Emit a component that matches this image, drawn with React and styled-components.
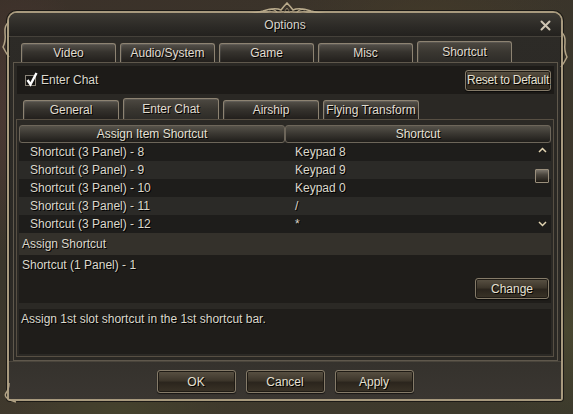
import React from "react";
import styled, { createGlobalStyle } from "styled-components";

const GlobalStyle = createGlobalStyle`
  html, body { margin: 0; padding: 0; }
  body {
    width: 573px; height: 414px; overflow: hidden;
    font-family: "Liberation Sans", Arial, sans-serif;
    font-size: 12px;
    color: #dcd8cc;
  }
  * { box-sizing: border-box; }
`;

const Page = styled.div`
  width: 573px;
  height: 414px;
  overflow: hidden;
  padding: 11px 0 0 7px;
  background:
    radial-gradient(ellipse 120px 200px at 20px 120px, rgba(90,60,60,0.55), transparent 70%),
    radial-gradient(ellipse 160px 120px at 560px 330px, rgba(80,80,50,0.6), transparent 70%),
    radial-gradient(ellipse 200px 90px at 430px 20px, rgba(70,60,40,0.6), transparent 70%),
    radial-gradient(ellipse 150px 60px at 120px 410px, rgba(70,70,45,0.7), transparent 70%),
    linear-gradient(160deg, #3b3129 0%, #3a362b 45%, #40392d 70%, #3c3a2c 100%);
`;

const Window = styled.div`
  position: relative;
  width: 556px;
  height: 390px;
  border: 2px solid #a89a7e;
  border-radius: 10px 10px 3px 3px;
  background: linear-gradient(#2d2b27, #2b2925 60%, #302d28);
  box-shadow: inset 0 0 0 1px #1a1815, 0 0 0 1px #1c1a16;
  display: flex;
  flex-direction: column;
`;

const Ornament = styled.svg`
  position: absolute;
  left: 218px;
  top: -11px;
  overflow: visible;
`;

const SideOrnament = styled.svg`
  position: absolute;
  top: ${(p) => p.$top}px;
  ${(p) => (p.$right ? "right: -7px;" : "left: -7px;")}
  overflow: visible;
`;

const TitleBar = styled.div`
  height: 24px;
  flex: none;
  display: flex;
  align-items: center;
  justify-content: center;
  position: relative;
  border-radius: 8px 8px 0 0;
  background: linear-gradient(#3d3a34, #2c2a26 60%, #23211e);
  border-bottom: 1px solid #45413a;
`;

const Title = styled.div`
  color: #d8d4ca;
  text-shadow: 1px 1px 0 #000;
  padding-top: 1px;
`;

const Close = styled.svg`
  position: absolute;
  right: 10px;
  top: 7px;
`;

const Body = styled.div`
  flex: 1;
  display: flex;
  flex-direction: column;
  padding: 0 3px 0 4px;
`;

const TabRow = styled.div`
  display: flex;
  align-items: flex-end;
  gap: 4px;
  height: 25px;
  padding-left: ${(p) => p.$pad}px;
  flex: none;
`;

const Tab = styled.div`
  width: ${(p) => p.$w}px;
  height: ${(p) => (p.$active ? 21 : 19)}px;
  display: flex;
  align-items: center;
  justify-content: center;
  white-space: nowrap;
  border: 1px solid #8d8372;
  border-bottom: none;
  border-radius: 3px 3px 0 0;
  color: #e0dcd0;
  text-shadow: 1px 1px 0 #000;
  background: ${(p) =>
    p.$active
      ? "linear-gradient(#4d4942, #3a3731 50%, #2e2c28)"
      : "linear-gradient(#55514a, #36332e 45%, #221f1c)"};
  box-shadow: inset 1px 1px 0 rgba(255,255,255,0.08);
`;

const Panel = styled.div`
  height: 299px;
  border: 1px solid #5f584c;
  background: #2a2824;
  display: flex;
  flex-direction: column;
  padding: 3px 3px 0 3px;
`;

const ChatBar = styled.div`
  height: 28px;
  flex: none;
  background: #1d1b18;
  display: flex;
  align-items: center;
  padding: 0 3px 0 8px;
`;

const CheckBox = styled.div`
  width: 11px;
  height: 11px;
  border: 1px solid #8b8579;
  background: #151412;
  position: relative;
  margin-right: 5px;
`;

const CheckMark = styled.svg`
  position: absolute;
  left: 0;
  top: -3px;
  overflow: visible;
`;

const Label = styled.span`
  color: #dcd8cc;
  text-shadow: 1px 1px 0 #000;
  flex: ${(p) => (p.$grow ? 1 : "none")};
`;

const Button = styled.div`
  width: ${(p) => p.$w}px;
  height: ${(p) => p.$h}px;
  display: flex;
  align-items: center;
  justify-content: center;
  white-space: nowrap;
  letter-spacing: ${(p) => (p.$tight ? "-0.25px" : "0")};
  border: 1px solid #857b69;
  border-radius: 3px;
  color: #e6e0d2;
  text-shadow: 1px 1px 0 #000;
  background: linear-gradient(#5a5244, #3d362b 45%, #2b251d 55%, #3a3327);
  box-shadow: inset 0 0 0 1px #1f1b15, 0 1px 1px rgba(0,0,0,0.6);
  flex: none;
`;

const SubPanel = styled.div`
  flex: 1;
  margin: 0 0 3px -1px;
  width: 538px;
  border: 1px solid #574f43;
  background: #2b2925;
  padding: 5px 2px 0 2px;
  display: flex;
  flex-direction: column;
`;

const HeaderRow = styled.div`
  display: grid;
  grid-template-columns: 266px 266px;
  height: 18px;
`;

const HeaderCell = styled.div`
  display: flex;
  align-items: center;
  justify-content: center;
  border: 1px solid #6d665a;
  border-radius: 3px;
  color: #e4e0d4;
  text-shadow: 1px 1px 0 #000;
  background: linear-gradient(#56524a, #3c3933 45%, #1f1d1a);
`;

const Rows = styled.div`
  position: relative;
`;

const Row = styled.div`
  display: grid;
  grid-template-columns: 266px 266px;
  height: 18px;
  align-items: center;
  background: ${(p) => (p.$alt ? "#2b2a27" : "#1e1d1b")};
  color: #dcd8cc;
  text-shadow: 1px 1px 0 #000;
`;

const Cell = styled.div`
  padding-left: ${(p) => p.$pad}px;
  white-space: nowrap;
`;

const ScrollArrow = styled.svg`
  position: absolute;
  right: 4px;
  top: ${(p) => p.$top}px;
`;

const Thumb = styled.div`
  position: absolute;
  right: 2px;
  top: 26px;
  width: 14px;
  height: 14px;
  border: 1px solid #9a8f7c;
  border-radius: 1px;
  background: linear-gradient(#7b756b, #4a453d 40%, #1e1a14);
`;

const SectionLabel = styled.div`
  height: 22px;
  display: flex;
  align-items: center;
  padding-left: 3px;
  background: #34312b;
  text-shadow: 1px 1px 0 #000;
`;

const AssignBox = styled.div`
  height: 48px;
  background: #1f1d1a;
  padding: 3px 2px 4px 3px;
  display: flex;
  flex-direction: column;
  justify-content: space-between;
  text-shadow: 1px 1px 0 #000;
`;

const ButtonRight = styled.div`
  display: flex;
  justify-content: flex-end;
`;

const DescBox = styled.div`
  height: 45px;
  margin-top: 6px;
  background: #1f1d1a;
  padding: 3px 2px;
  text-shadow: 1px 1px 0 #000;
`;

const Footer = styled.div`
  flex: 1;
  display: flex;
  justify-content: center;
  align-items: flex-start;
  gap: 10px;
  padding-top: 8px;
  margin: 0 -3px 0 -4px;
  border-top: 1px solid #4a453c;
  background: linear-gradient(#35322d, #3a3631);
`;

const rows = [
  ["Shortcut (3 Panel) - 8", "Keypad 8"],
  ["Shortcut (3 Panel) - 9", "Keypad 9"],
  ["Shortcut (3 Panel) - 10", "Keypad 0"],
  ["Shortcut (3 Panel) - 11", "/"],
  ["Shortcut (3 Panel) - 12", "*"],
];

const mainTabs = ["Video", "Audio/System", "Game", "Misc", "Shortcut"];
const subTabs = ["General", "Enter Chat", "Airship", "Flying Transform"];

export default function App() {
  return (
    <>
      <GlobalStyle />
      <Page>
        <Window>
          <Ornament width="120" height="18" viewBox="0 0 120 18">
            <path d="M0 13 Q22 13 36 9 Q48 5 54 8 Q57 4 60 1 Q63 4 66 8 Q72 5 84 9 Q98 13 120 13" fill="none" stroke="#b9aa8b" strokeWidth="1.6" />
            <path d="M10 15 Q30 15 42 11 Q52 8 56 11 Q58 9 60 6 Q62 9 64 11 Q68 8 78 11 Q90 15 110 15" fill="none" stroke="#8a7d66" strokeWidth="1" />
            <path d="M50 10 Q46 6 42 8 M70 10 Q74 6 78 8" fill="none" stroke="#b9aa8b" strokeWidth="1.2" />
          </Ornament>
          <SideOrnament $top={6} width="10" height="40" viewBox="0 0 10 40">
            <path d="M8 2 Q2 6 3 14 Q4 22 1 28 Q4 34 7 38" fill="none" stroke="#b3a487" strokeWidth="1.5" />
          </SideOrnament>
          <SideOrnament $top={16} $right width="10" height="40" viewBox="0 0 10 40">
            <path d="M2 2 Q8 6 7 14 Q6 22 9 28 Q6 34 3 38" fill="none" stroke="#b3a487" strokeWidth="1.5" />
          </SideOrnament>
          <SideOrnament $top={370} width="14" height="20" viewBox="0 0 14 20">
            <path d="M7 0 Q7 6 4 10 Q2 13 6 16 Q9 18 14 19" fill="none" stroke="#b3a487" strokeWidth="1.5" />
          </SideOrnament>
          <TitleBar>
            <Title>Options</Title>
            <Close width="11" height="11" viewBox="0 0 11 11">
              <path d="M1.5 1.5 L9.5 9.5 M9.5 1.5 L1.5 9.5" stroke="#cfc5b3" strokeWidth="2" strokeLinecap="round" />
            </Close>
          </TitleBar>
          <Body>
            <TabRow $pad={8}>
              {mainTabs.map((t) => (
                <Tab key={t} $w={95} $active={t === "Shortcut"}>{t}</Tab>
              ))}
            </TabRow>
            <Panel>
              <ChatBar>
                <CheckBox>
                  <CheckMark width="12" height="13" viewBox="0 0 12 13">
                    <path d="M1.5 7 L4.5 11.5 L10.5 0" fill="none" stroke="#ffffff" strokeWidth="2.4" />
                  </CheckMark>
                </CheckBox>
                <Label $grow>Enter Chat</Label>
                <Button $w={86} $h={21} $tight>Reset to Default</Button>
              </ChatBar>
              <TabRow $pad={6}>
                {subTabs.map((t) => (
                  <Tab key={t} $w={96} $active={t === "Enter Chat"}>{t}</Tab>
                ))}
              </TabRow>
              <SubPanel>
                <HeaderRow>
                  <HeaderCell>Assign Item Shortcut</HeaderCell>
                  <HeaderCell>Shortcut</HeaderCell>
                </HeaderRow>
                <Rows>
                  {rows.map(([a, b], i) => (
                    <Row key={a} $alt={i % 2 === 1}>
                      <Cell $pad={11}>{a}</Cell>
                      <Cell $pad={10}>{b}</Cell>
                    </Row>
                  ))}
                  <ScrollArrow $top={4} width="9" height="6" viewBox="0 0 9 6">
                    <path d="M1 5 L4.5 1.5 L8 5" fill="none" stroke="#e2d4b2" strokeWidth="1.5" />
                  </ScrollArrow>
                  <Thumb />
                  <ScrollArrow $top={78} width="9" height="6" viewBox="0 0 9 6">
                    <path d="M1 1 L4.5 4.5 L8 1" fill="none" stroke="#e2d4b2" strokeWidth="1.5" />
                  </ScrollArrow>
                </Rows>
                <SectionLabel>Assign Shortcut</SectionLabel>
                <AssignBox>
                  <div>Shortcut (1 Panel) - 1</div>
                  <ButtonRight>
                    <Button $w={74} $h={21}>Change</Button>
                  </ButtonRight>
                </AssignBox>
                <DescBox>Assign 1st slot shortcut in the 1st shortcut bar.</DescBox>
              </SubPanel>
            </Panel>
            <Footer>
              <Button $w={79} $h={23}>OK</Button>
              <Button $w={79} $h={23}>Cancel</Button>
              <Button $w={79} $h={23}>Apply</Button>
            </Footer>
          </Body>
        </Window>
      </Page>
    </>
  );
}
